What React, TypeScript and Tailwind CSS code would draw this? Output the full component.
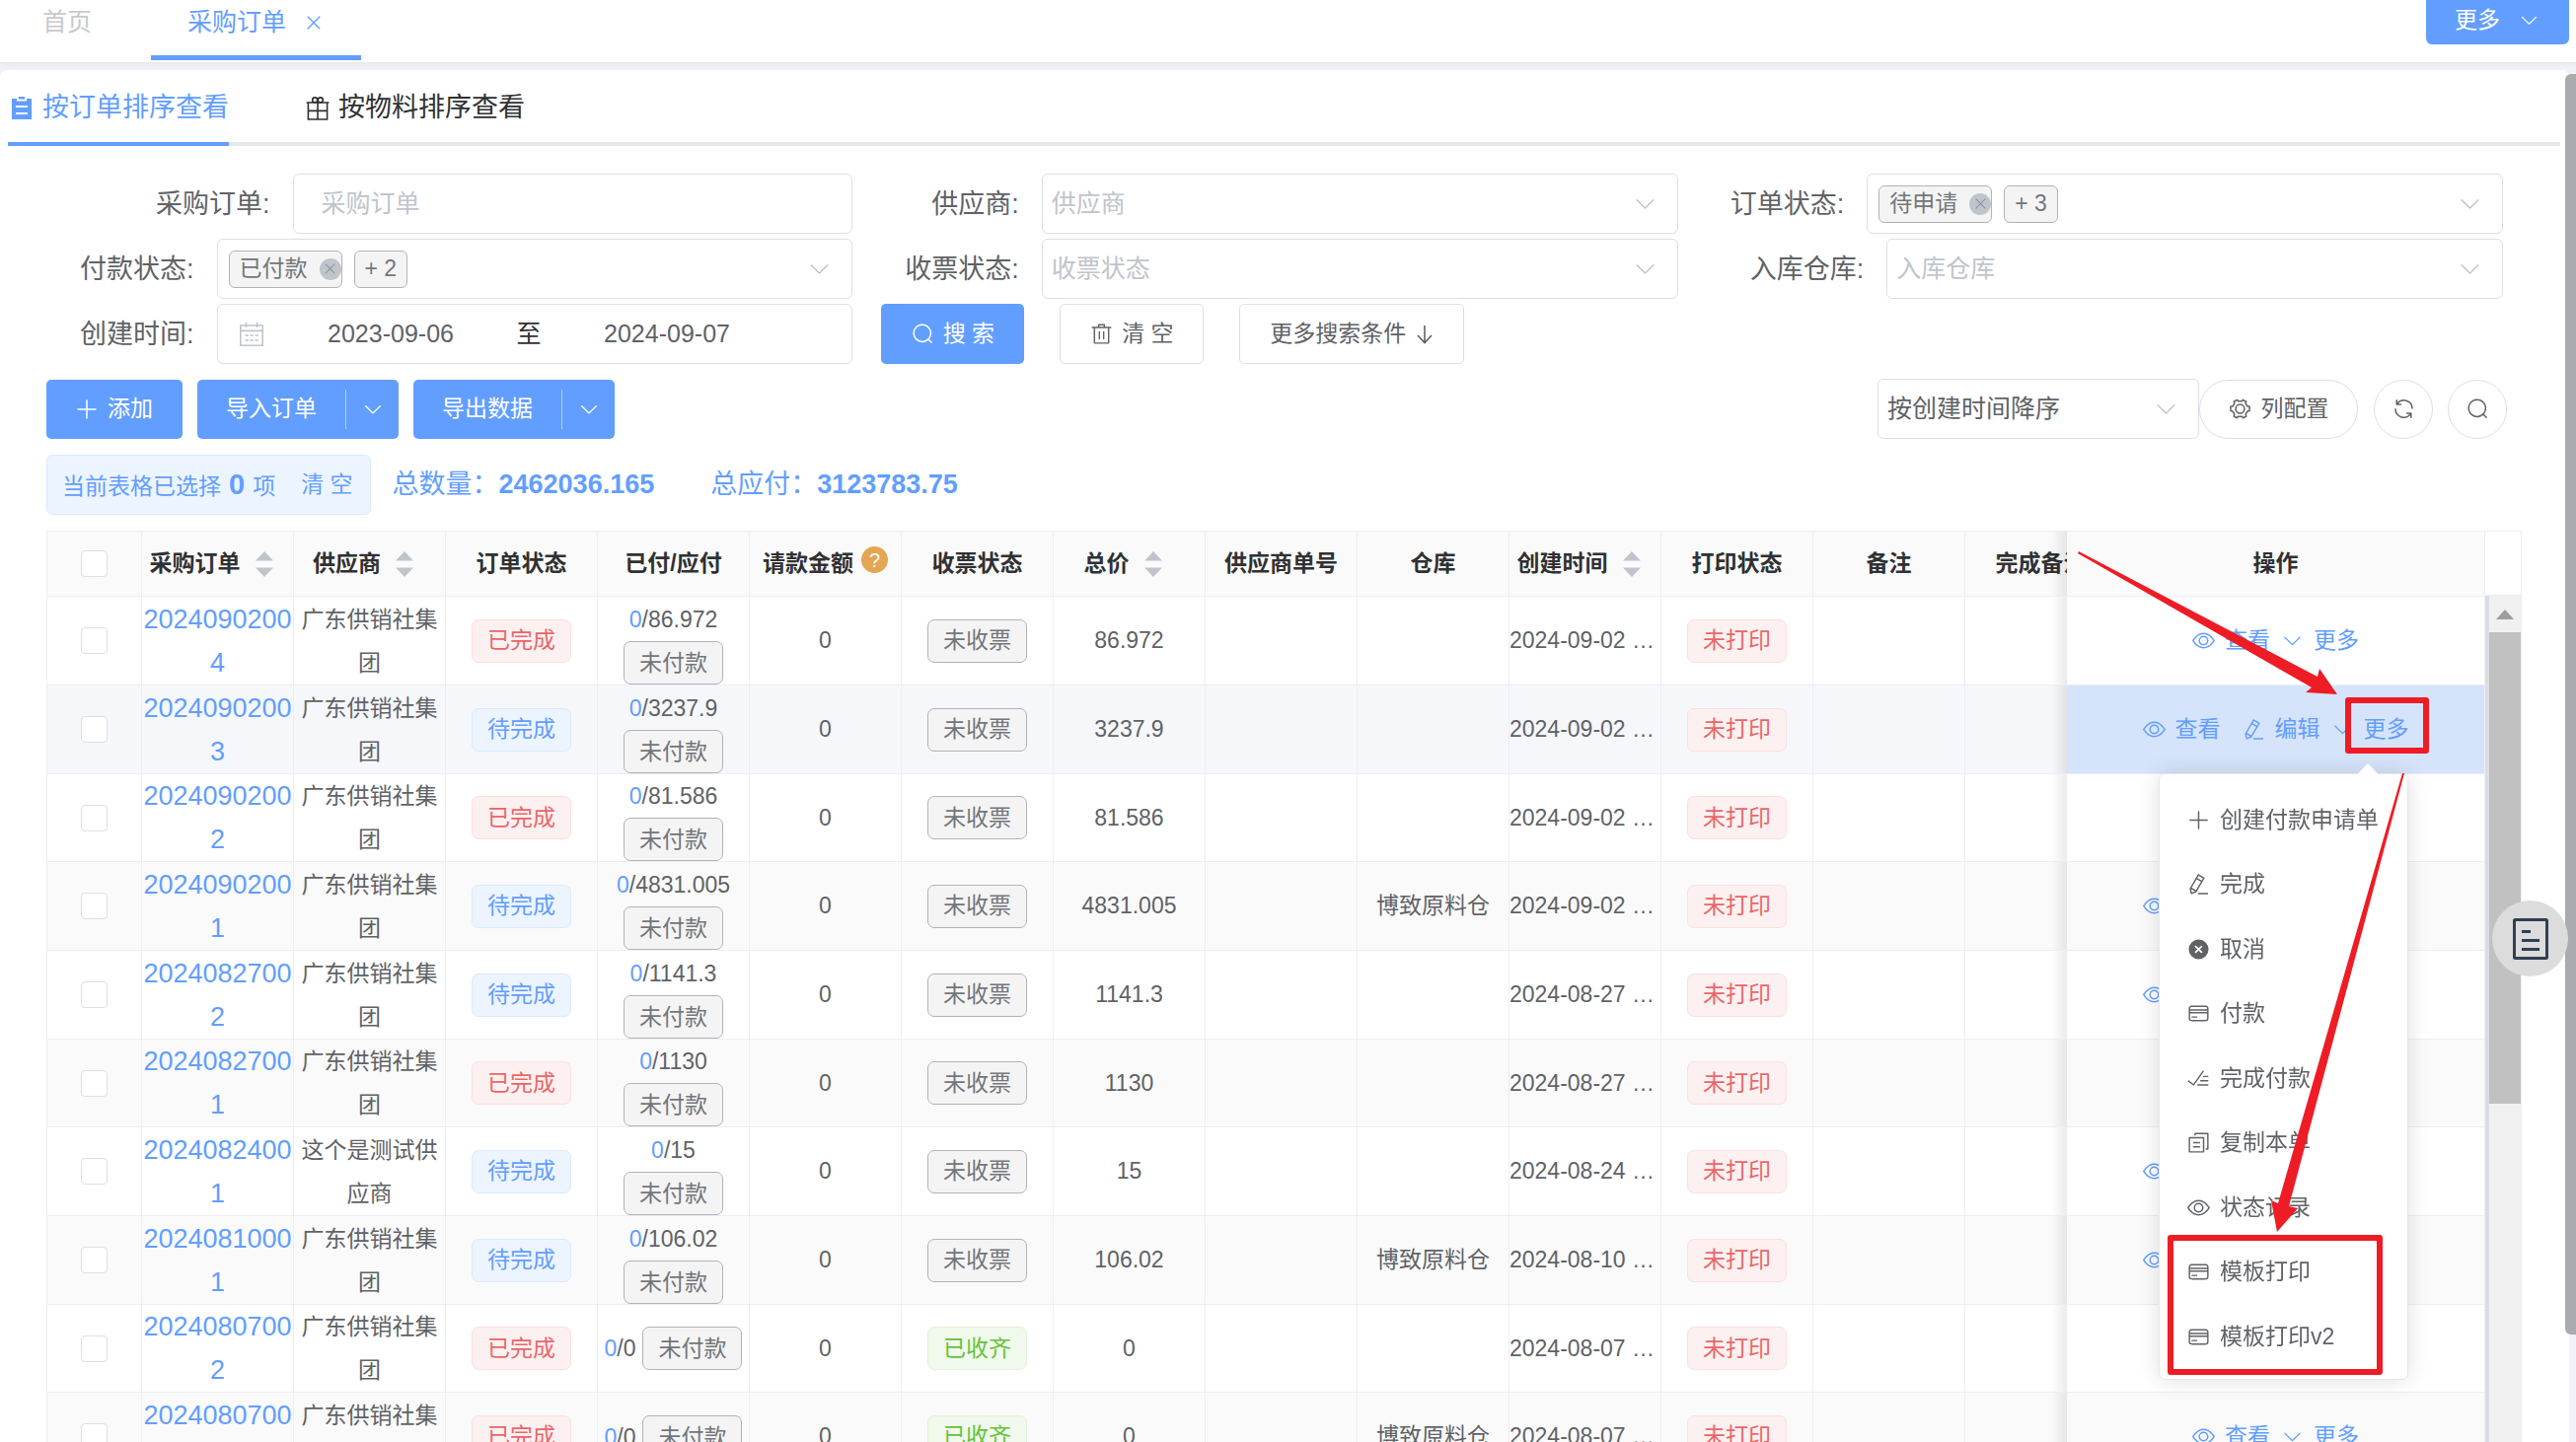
import type { ReactNode } from 'react';

const PATHS = {
  down: 'M831.872 340.864 512 652.672 192.128 340.864a30.592 30.592 0 0 0-42.752 0 29.12 29.12 0 0 0 0 41.6L489.664 714.24a32 32 0 0 0 44.672 0l340.288-331.712a29.12 29.12 0 0 0 0-41.728 30.592 30.592 0 0 0-42.752 0z',
  search:
    'm795.904 750.72 124.992 124.928a32 32 0 0 1-45.248 45.248L750.656 795.904a416 416 0 1 1 45.248-45.248zM480 832a352 352 0 1 0 0-704 352 352 0 0 0 0 704z',
  trash:
    'M160 256H96a32 32 0 0 1 0-64h256V95.936a32 32 0 0 1 32-32h256a32 32 0 0 1 32 32V192h256a32 32 0 1 1 0 64h-64v672a32 32 0 0 1-32 32H192a32 32 0 0 1-32-32V256zm448-64v-64H416v64h192zM224 896h576V256H224v640zm192-128a32 32 0 0 1-32-32V416a32 32 0 0 1 64 0v320a32 32 0 0 1-32 32zm192 0a32 32 0 0 1-32-32V416a32 32 0 0 1 64 0v320a32 32 0 0 1-32 32z',
  view: 'M512 160c320 0 512 352 512 352S832 864 512 864 0 512 0 512s192-352 512-352zm0 64c-225.28 0-384.128 208.064-436.8 288 52.608 79.872 211.456 288 436.8 288 225.28 0 384.128-208.064 436.8-288-52.608-79.872-211.456-288-436.8-288zm0 64a224 224 0 1 1 0 448 224 224 0 0 1 0-448zm0 64a160.192 160.192 0 0 0-160 160c0 88.192 71.744 160 160 160s160-71.808 160-160-71.744-160-160-160z',
  edit: 'm199.04 672.64 193.984 112 224-387.968-193.92-112-224 388.032zm-23.872 60.16 32.896 148.288 144.896-45.696L175.168 732.8zM455.04 229.248l193.92 112 56.704-98.112-193.984-112-56.64 98.112zM104.32 708.8l384-665.024 304.768 175.936L409.152 884.8h.064l-248.448 78.336L104.32 708.8zm384 254.272v-64h448v64h-448z',
  cancel:
    'M512 64a448 448 0 1 1 0 896 448 448 0 0 1 0-896zm0 393.664L407.936 353.6a38.4 38.4 0 1 0-54.336 54.336L457.664 512 353.6 616.064a38.4 38.4 0 1 0 54.336 54.336L512 566.336 616.064 670.4a38.4 38.4 0 1 0 54.336-54.336L566.336 512 670.4 407.936a38.4 38.4 0 1 0-54.336-54.336L512 457.664z',
  plus: 'M480 480V128a32 32 0 0 1 64 0v352h352a32 32 0 1 1 0 64H544v352a32 32 0 1 1-64 0V544H128a32 32 0 0 1 0-64h352z',
  close:
    'M764.288 214.592 512 466.88 259.712 214.592a31.936 31.936 0 0 0-45.12 45.12L466.752 512 214.528 764.224a31.936 31.936 0 1 0 45.12 45.184L512 557.184l252.288 252.288a31.936 31.936 0 0 0 45.12-45.12L557.12 512.064l252.288-252.352a31.936 31.936 0 1 0-45.12-45.184z',
  finished:
    'M280.768 753.728 691.456 167.04a32 32 0 1 1 52.416 36.672L314.24 817.472a32 32 0 0 1-45.44 7.296l-230.4-172.8a32 32 0 0 1 38.4-51.2l203.968 152.96zM736 448a32 32 0 1 1 0-64h192a32 32 0 1 1 0 64H736zM608 640a32 32 0 0 1 0-64h319.936a32 32 0 1 1 0 64H608zM480 832a32 32 0 1 1 0-64h447.936a32 32 0 1 1 0 64H480z',
  copy: 'M128 320v576h576V320H128zm-32-64h640a32 32 0 0 1 32 32v640a32 32 0 0 1-32 32H96a32 32 0 0 1-32-32V288a32 32 0 0 1 32-32zM960 96v704a32 32 0 0 1-32 32h-96v-64h64V128H384v64h-64V96a32 32 0 0 1 32-32h576a32 32 0 0 1 32 32zM256 672h320v64H256v-64zm0-192h320v64H256v-64z',
  card: 'M896 324.096c0-42.368-2.496-55.296-9.536-68.48a52.352 52.352 0 0 0-22.144-22.08c-13.12-7.04-26.048-9.536-68.416-9.536H228.096c-42.368 0-55.296 2.496-68.48 9.536a52.352 52.352 0 0 0-22.08 22.144c-7.04 13.12-9.536 26.048-9.536 68.416v375.808c0 42.368 2.496 55.296 9.536 68.48a52.352 52.352 0 0 0 22.144 22.08c13.12 7.04 26.048 9.536 68.416 9.536h567.808c42.368 0 55.296-2.496 68.48-9.536a52.352 52.352 0 0 0 22.08-22.144c7.04-13.12 9.536-26.048 9.536-68.416V324.096zm64 0v375.808c0 57.088-5.952 77.76-17.088 98.56-11.136 20.928-27.52 37.312-48.384 48.448-20.864 11.136-41.6 17.088-98.56 17.088H228.032c-57.088 0-77.76-5.952-98.56-17.088a116.288 116.288 0 0 1-48.448-48.384c-11.136-20.864-17.088-41.6-17.088-98.56V324.032c0-57.088 5.952-77.76 17.088-98.56 11.136-20.928 27.52-37.312 48.384-48.448 20.864-11.136 41.6-17.088 98.56-17.088H795.84c57.088 0 77.76 5.952 98.56 17.088 20.928 11.136 37.312 27.52 48.448 48.384 11.136 20.864 17.088 41.6 17.088 98.56zM64 320h896v64H64v-64zm0 128h896v64H64v-64zm128 192h256v64H192z',
};

type IconName = keyof typeof PATHS;

function Icon({ name, className = 'size-[23px]' }: { name: IconName; className?: string }) {
  return (
    <svg viewBox="0 0 1024 1024" fill="currentColor" aria-hidden="true" className={`shrink-0 ${className}`}>
      <path d={PATHS[name]} />
    </svg>
  );
}

function GearIcon() {
  return (
    <svg viewBox="0 0 24 24" fill="none" stroke="currentColor" strokeWidth="1.6" strokeLinejoin="round" aria-hidden="true" className="size-[23px] shrink-0">
      <circle cx="12" cy="12" r="4.6" />
      <path d="M9 2.4 L10 4 H14 L15 2.4 L18.6 4.4 L17.8 6.2 L19.8 9.4 H22 V14 L19.8 14.6 L17.8 17.8 L18.6 19.8 L15 21.6 L14 20 H10 L9 21.6 L5.4 19.8 L6.2 17.8 L4.2 14.6 L2 14 V9.4 H4.2 L6.2 6.2 L5.4 4.4 Z" />
    </svg>
  );
}

function RefreshIcon() {
  return (
    <svg viewBox="0 0 24 24" fill="none" stroke="currentColor" strokeWidth="1.6" strokeLinecap="round" strokeLinejoin="round" aria-hidden="true" className="size-[23px]">
      <path d="M20.9 11.4A8.9 8.9 0 0 0 5 6.4M4.400 3v4.400h4.400M3.1 12.2A8.9 8.9 0 0 0 19 17.6M19.600 21v-4.400h-4.400" />
    </svg>
  );
}

function CalendarIcon() {
  return (
    <svg viewBox="0 0 26 26" fill="none" stroke="currentColor" strokeWidth="1.6" aria-hidden="true" className="size-[26px] shrink-0">
      <path d="M1.8 4h22.4v20.2H1.8zM1.8 9.4h22.4M7.4 1v5M18.6 1v5" />
      <path d="M6.4 14h13.4M6.4 19h13.4" strokeDasharray="3.6 1.4" />
    </svg>
  );
}

function ClipboardIcon() {
  return (
    <svg viewBox="0 0 20 23" aria-hidden="true" className="h-[23px] w-[20px] shrink-0">
      <path d="M0 2h5v2.4h10V2h5v21H0z" fill="currentColor" />
      <path d="M7 0h6v2.6H7z" fill="currentColor" />
      <path d="M4 10h12M4 17h12" stroke="white" strokeWidth="1.8" />
    </svg>
  );
}

function GiftIcon() {
  return (
    <svg viewBox="0 0 24 24" fill="none" stroke="currentColor" strokeWidth="1.6" aria-hidden="true" className="size-[24px] shrink-0">
      <path d="M2.4 6h19.2v17H2.4zM.6 6h22.8M2.4 14.4h19.2M12 6v17" />
      <circle cx="9.2" cy="3.4" r="2.5" />
      <circle cx="14.8" cy="3.4" r="2.5" />
    </svg>
  );
}

function NoteIcon() {
  return (
    <svg viewBox="0 0 36 42" fill="none" stroke="#303f54" strokeWidth="3" aria-hidden="true" className="h-[42px] w-[36px]">
      <rect x="1.5" y="1.5" width="33" height="39" rx="1" />
      <path d="M9 13.5h9M9 22.5h18M9 31.5h18" />
    </svg>
  );
}

function Chevron() {
  return <Icon name="down" className="size-[25px] text-[#c0c4cc]" />;
}

const BOX = 'h-[61px] min-w-0 flex-1 rounded-[6px] border border-[#dcdfe6] bg-white text-[25px]';

function Field({ id, label, pad, children }: { id: string; label: string; pad: string; children: ReactNode }) {
  return (
    <div className={`flex items-center gap-[23px] ${pad}`}>
      <label htmlFor={id} className="text-[27px] leading-[40px] whitespace-nowrap">
        {label}:
      </label>
      {children}
    </div>
  );
}

function SelectBox({ id, text }: { id: string; text: string }) {
  return (
    <div className={`flex items-center pr-[20px] ${BOX}`}>
      <select id={id} defaultValue="" className="h-full min-w-0 flex-1 appearance-none bg-transparent pl-[9px] text-[#c0c4cc] outline-none">
        <option value="">{text}</option>
      </select>
      <Chevron />
    </div>
  );
}

function TagBox({ id, tag, more }: { id: string; tag: string; more: string }) {
  return (
    <div className={`flex items-center gap-3 pr-[20px] pl-[11px] ${BOX}`}>
      <span className="flex h-[38px] items-center gap-3 rounded-[6px] border border-[#b1b3b8] bg-[#f4f4f5] pl-[10px] text-[23px] text-[#73767a]">
        {tag}
        <button type="button" aria-label={`移除${tag}`} className="flex size-[22px] items-center justify-center rounded-full bg-[#c0c4cc] text-[#909399]">
          <Icon name="close" className="size-[17px]" />
        </button>
      </span>
      <span className="flex h-[38px] items-center rounded-[6px] border border-[#b1b3b8] bg-[#f4f4f5] px-[10px] text-[23px] text-[#73767a]">{more}</span>
      <button id={id} type="button" aria-label="展开选项" className="flex h-full flex-1 items-center justify-end">
        <Chevron />
      </button>
    </div>
  );
}

const TONES = {
  red: 'border-[#fbe0e0] bg-[#fdf0f0] text-[#ea6668]',
  blue: 'border-[#dbeafe] bg-[#ecf4ff] text-[#629eff]',
  green: 'border-[#e1f3d8] bg-[#f0f9eb] text-[#67c23a]',
  gray: 'border-[#b1b3b8] bg-[#f4f4f5] text-[#73767a]',
};

function Tag({ tone, children }: { tone: keyof typeof TONES; children: ReactNode }) {
  return <span className={`inline-flex h-[44px] items-center rounded-[7px] border px-[15px] align-middle ${TONES[tone]}`}>{children}</span>;
}

interface Row {
  no: string;
  vendor?: string;
  done?: boolean;
  total: string;
  store?: boolean;
  date: string;
  settled?: boolean;
}

const ROWS: Row[] = [
  { no: '20240902004', done: true, total: '86.972', date: '2024-09-02' },
  { no: '20240902003', total: '3237.9', date: '2024-09-02' },
  { no: '20240902002', done: true, total: '81.586', date: '2024-09-02' },
  { no: '20240902001', total: '4831.005', store: true, date: '2024-09-02' },
  { no: '20240827002', total: '1141.3', date: '2024-08-27' },
  { no: '20240827001', done: true, total: '1130', date: '2024-08-27' },
  { no: '20240824001', vendor: '这个是测试供应商', total: '15', date: '2024-08-24' },
  { no: '20240810001', total: '106.02', store: true, date: '2024-08-10' },
  { no: '20240807002', done: true, total: '0', date: '2024-08-07', settled: true },
  { no: '20240807001', done: true, total: '0', store: true, date: '2024-08-07', settled: true },
];

const COLUMNS: { title: string; sort?: boolean; help?: boolean }[] = [
  { title: '采购订单', sort: true },
  { title: '供应商', sort: true },
  { title: '订单状态' },
  { title: '已付/应付' },
  { title: '请款金额', help: true },
  { title: '收票状态' },
  { title: '总价', sort: true },
  { title: '供应商单号' },
  { title: '仓库' },
  { title: '创建时间', sort: true },
  { title: '打印状态' },
  { title: '备注' },
  { title: '完成备注' },
];

const MENU: { icon: IconName; text: string }[] = [
  { icon: 'plus', text: '创建付款申请单' },
  { icon: 'edit', text: '完成' },
  { icon: 'cancel', text: '取消' },
  { icon: 'card', text: '付款' },
  { icon: 'finished', text: '完成付款' },
  { icon: 'copy', text: '复制本单' },
  { icon: 'view', text: '状态记录' },
  { icon: 'card', text: '模板打印' },
  { icon: 'card', text: '模板打印v2' },
];

function Checkbox({ label }: { label: string }) {
  return <input type="checkbox" aria-label={label} className="mx-auto block size-[27px] appearance-none rounded-[4px] border border-[#dcdfe6] bg-white" />;
}

function SortArrows() {
  return (
    <svg viewBox="0 0 18 26" fill="#c0c4cc" aria-hidden="true" className="h-[26px] w-[18px]">
      <path d="M9 0l9 9.5H0zM9 26l9-9.5H0z" />
    </svg>
  );
}

function Menu() {
  return (
    <div role="menu" className="absolute top-full right-[77px] w-[253px] rounded-[7px] border border-[#e4e7ed] bg-white pt-[13px] pb-[10px] text-left shadow-[0_0_22px_rgba(0,0,0,0.13)]">
      <svg viewBox="0 0 22 13" aria-hidden="true" className="absolute -top-[12px] right-[29px] h-[13px] w-[22px]">
        <path d="M0 12.5L11 1l11 11.500z" fill="white" />
      </svg>
      {MENU.map((m) => (
        <button key={m.text} type="button" role="menuitem" className="flex h-[65px] w-full items-center gap-[10px] pl-[28px] whitespace-nowrap text-[#606266] even:h-[66px]">
          <Icon name={m.icon} />
          {m.text}
        </button>
      ))}
    </div>
  );
}

const CELL = 'border-r border-b border-[#ebeef5] p-0';
const PINNED =
  'sticky right-0 before:pointer-events-none before:absolute before:inset-y-0 before:right-full before:w-4 before:bg-linear-to-l before:from-black/8 before:to-transparent';

function OrderRow({ row, index }: { row: Row; index: number }) {
  const hover = index === 1;
  const bg = index % 2 ? 'bg-[#fafafa]' : 'bg-white';
  return (
    <tr className={`h-[90px] nth-[3n]:h-[89px] ${hover ? 'bg-[#f5f7fb]' : bg}`}>
      <td className={CELL}>
        <Checkbox label={`选择 ${row.no}`} />
      </td>
      <td className={CELL}>
        <a href="#order" className="block text-[27px] leading-[44px] break-all text-[#629eff]">
          {row.no}
        </a>
      </td>
      <td className={`${CELL} px-[6px] leading-[44px]`}>{row.vendor ?? '广东供销社集团'}</td>
      <td className={CELL}>
        <Tag tone={row.done ? 'red' : 'blue'}>{row.done ? '已完成' : '待完成'}</Tag>
      </td>
      <td className={`${CELL} leading-[44px]`}>
        <div className={row.settled ? 'flex items-center justify-center gap-[7px]' : 'flex flex-col items-center'}>
          <span>
            <span className="text-[#629eff]">0</span>/{row.total}
          </span>
          <Tag tone="gray">未付款</Tag>
        </div>
      </td>
      <td className={CELL}>0</td>
      <td className={CELL}>
        <Tag tone={row.settled ? 'green' : 'gray'}>{row.settled ? '已收齐' : '未收票'}</Tag>
      </td>
      <td className={CELL}>{row.total}</td>
      <td className={CELL} />
      <td className={CELL}>{row.store ? '博致原料仓' : ''}</td>
      <td className={`${CELL} text-left whitespace-nowrap`}>{row.date} …</td>
      <td className={CELL}>
        <Tag tone="red">未打印</Tag>
      </td>
      <td className={CELL} />
      <td className={CELL} />
      <td className={`${CELL} ${PINNED} ${hover ? 'z-20 bg-[#d6e4fb]' : `z-10 ${bg}`}`}>
        <div className="flex items-center justify-center text-[#629eff]">
          <button type="button" className="flex items-center gap-[10px]">
            <Icon name="view" />
            查看
          </button>
          {!row.done && (
            <button type="button" className="ml-[22px] flex items-center gap-[10px]">
              <Icon name="edit" />
              编辑
            </button>
          )}
          <button type="button" aria-haspopup="menu" className="ml-[11px] flex items-center gap-[10px]">
            <Icon name="down" />
            更多
          </button>
        </div>
        {hover && <Menu />}
      </td>
    </tr>
  );
}

function SplitButton({ text }: { text: string }) {
  return (
    <div className="flex h-[60px] items-center overflow-hidden rounded-[5px] bg-[#629eff] text-[23px] text-white">
      <button type="button" className="h-full px-[29px]">
        {text}
      </button>
      <span className="h-[40px] w-px bg-white/50" />
      <button type="button" aria-label={`${text}更多`} className="flex h-full w-[53px] items-center justify-center">
        <Icon name="down" className="size-[22px]" />
      </button>
    </div>
  );
}

const OUTLINE = 'flex items-center justify-center border border-[#dcdfe6] bg-white text-[23px]';

export default function App() {
  return (
    <div className="relative flex h-screen flex-col overflow-hidden bg-[#f0f2f7] font-['Liberation_Sans','Noto_Sans_CJK_SC',sans-serif] text-[23px] text-[#606266]">
      <header className="z-10 flex h-[63px] shrink-0 items-start justify-between bg-white pr-[7px] shadow-[0_2px_6px_rgba(0,0,0,0.05)]">
        <nav className="flex text-[25px]">
          <a href="#home" className="pt-[4px] pr-[60px] pl-[43px] leading-[36px] text-[#c8c9cc]">
            首页
          </a>
          <div className="flex h-[61px] items-start gap-[17px] border-b-[5px] border-[#629eff] px-[37px] pt-[4px] leading-[36px] text-[#629eff]">
            <a href="#orders">采购订单</a>
            <button type="button" aria-label="关闭" className="flex h-[38px] items-center">
              <Icon name="close" className="size-[22px]" />
            </button>
          </div>
        </nav>
        <button type="button" className="flex h-[45px] items-center gap-[19px] rounded-b-[6px] bg-[#629eff] pr-[30px] pb-[5px] pl-[29px] text-white">
          更多
          <Icon name="down" className="size-[21px]" />
        </button>
      </header>

      <main className="mt-[8px] mr-[7px] flex min-h-0 flex-1 flex-col rounded-t-[8px] bg-white">
        <div role="tablist" className="mr-[9px] ml-[8px] flex h-[77px] shrink-0 items-stretch border-b-4 border-[#e4e7ed] text-[27px]">
          <button role="tab" type="button" aria-selected="true" className="-mb-[4px] flex items-center gap-[11px] border-b-4 border-[#629eff] pt-1 pl-[4px] text-[#629eff]">
            <ClipboardIcon />
            按订单排序查看
          </button>
          <button role="tab" type="button" aria-selected="false" className="ml-[78px] flex items-center gap-[9px] pt-1 text-[#303133]">
            <GiftIcon />
            按物料排序查看
          </button>
        </div>

        <form className="mt-[28px] mr-[67px] ml-[28px] grid grid-cols-3 gap-y-[5px]" onSubmit={(e) => e.preventDefault()}>
          <Field id="order" label="采购订单" pad="pl-[130px]">
            <input id="order" placeholder="采购订单" className={`pl-[28px] placeholder:text-[#c0c4cc] ${BOX}`} />
          </Field>
          <Field id="vendor" label="供应商" pad="pl-[80px]">
            <SelectBox id="vendor" text="供应商" />
          </Field>
          <Field id="state" label="订单状态" pad="pl-[53px]">
            <TagBox id="state" tag="待申请" more="+ 3" />
          </Field>
          <Field id="pay" label="付款状态" pad="pl-[53px]">
            <TagBox id="pay" tag="已付款" more="+ 2" />
          </Field>
          <Field id="invoice" label="收票状态" pad="pl-[53px]">
            <SelectBox id="invoice" text="收票状态" />
          </Field>
          <Field id="store" label="入库仓库" pad="pl-[73px]">
            <SelectBox id="store" text="入库仓库" />
          </Field>
          <Field id="from" label="创建时间" pad="pl-[53px]">
            <div className={`flex items-center pl-[21px] ${BOX}`}>
              <span className="text-[#c0c4cc]">
                <CalendarIcon />
              </span>
              <input id="from" defaultValue="2023-09-06" className="ml-[36px] w-[185px] text-center" />
              <span className="w-[95px] text-center text-[#303133]">至</span>
              <input aria-label="结束日期" defaultValue="2024-09-07" className="w-[185px] text-center" />
            </div>
          </Field>
          <div className="flex gap-[36px] pl-[29px]">
            <button type="submit" className="flex h-[61px] w-[145px] items-center justify-center gap-[9px] rounded-[5px] bg-[#629eff] text-white">
              <Icon name="search" />搜 索
            </button>
            <button type="reset" className={`h-[61px] w-[146px] gap-[9px] rounded-[5px] ${OUTLINE}`}>
              <Icon name="trash" />清 空
            </button>
            <button type="button" className={`h-[61px] w-[228px] gap-[10px] rounded-[5px] ${OUTLINE}`}>
              更多搜索条件
              <svg viewBox="0 0 18 20" fill="none" stroke="currentColor" strokeWidth="1.6" aria-hidden="true" className="h-[20px] w-[18px]">
                <path d="M9 1v17M2 11l7 7.500 7-7.500" />
              </svg>
            </button>
          </div>
        </form>

        <div className="mt-[15px] mr-[63px] ml-[47px] flex items-center justify-between">
          <div className="flex gap-[15px]">
            <button type="button" className="flex h-[60px] items-center gap-[9px] rounded-[5px] bg-[#629eff] pr-[30px] pl-[29px] text-white">
              <Icon name="plus" className="size-[24px]" />
              添加
            </button>
            <SplitButton text="导入订单" />
            <SplitButton text="导出数据" />
          </div>
          <div className="flex items-center">
            <div className="flex h-[61px] w-[326px] items-center rounded-[6px] border border-[#dcdfe6] pr-[20px] text-[25px]">
              <select aria-label="排序" className="h-full min-w-0 flex-1 appearance-none bg-transparent pl-[9px] outline-none">
                <option>按创建时间降序</option>
              </select>
              <Chevron />
            </div>
            <button type="button" className={`h-[60px] w-[161px] gap-[10px] rounded-full ${OUTLINE}`}>
              <GearIcon />
              列配置
            </button>
            <button type="button" aria-label="刷新" className={`ml-4 size-[60px] rounded-full ${OUTLINE}`}>
              <RefreshIcon />
            </button>
            <button type="button" aria-label="搜索" className={`ml-[15px] size-[60px] rounded-full ${OUTLINE}`}>
              <Icon name="search" />
            </button>
          </div>
        </div>

        <div className="mt-[16px] ml-[47px] flex items-center text-[27px] text-[#629eff]">
          <div className="flex h-[61px] items-center gap-[26px] rounded-[6px] border border-[#dbeafe] bg-[#ecf4ff] pr-[17px] pl-[15px] text-[23px]">
            <span className="flex items-baseline gap-[8px] whitespace-nowrap">
              当前表格已选择<b className="text-[29px]">0</b>项
            </span>
            <button type="button">清 空</button>
          </div>
          <span className="ml-[22px] whitespace-nowrap">
            总数量：<b>2462036.165</b>
          </span>
          <span className="ml-[57px] whitespace-nowrap">
            总应付：<b>3123783.75</b>
          </span>
        </div>

        <div className="mt-[16px] mr-[48px] ml-[47px] flex min-h-0 flex-1 border-t border-r border-l border-[#ebeef5]">
          <div className="min-w-0 flex-1 overflow-hidden">
            <table className="w-[2522px] table-fixed border-separate border-spacing-0 text-center">
              <colgroup>
                <col className="w-[96px]" />
                {COLUMNS.map((c) => (
                  <col key={c.title} className="w-[154px]" />
                ))}
                <col className="w-[424px]" />
              </colgroup>
              <thead className="text-[#303133]">
                <tr className="h-[66px] bg-[#fafafa]">
                  <th className={CELL}>
                    <Checkbox label="全选" />
                  </th>
                  {COLUMNS.map((c) => (
                    <th key={c.title} className={`${CELL} font-bold whitespace-nowrap`}>
                      <div className="flex items-center justify-center">
                        {c.title}
                        {c.sort && (
                          <button type="button" aria-label={`按${c.title}排序`} className="mr-[13px] ml-[15px]">
                            <SortArrows />
                          </button>
                        )}
                        {c.help && (
                          <span className="mb-2 ml-[8px] flex size-[27px] items-center justify-center rounded-full bg-[#e4a652] text-[20px] font-normal text-white">?</span>
                        )}
                      </div>
                    </th>
                  ))}
                  <th className={`${CELL} ${PINNED} z-10 bg-[#fafafa]`}>操作</th>
                </tr>
              </thead>
              <tbody>
                {ROWS.map((row, i) => (
                  <OrderRow key={row.no} row={row} index={i} />
                ))}
              </tbody>
            </table>
          </div>
          <div className="flex w-[36px] shrink-0 flex-col" aria-hidden="true">
            <div className="h-[65px] border-b border-[#ebeef5]" />
            <div className="flex flex-1 flex-col border-l-4 border-[#dcdde2] bg-[#f0f0f1]">
              <div className="flex h-[37px] items-center justify-center">
                <svg viewBox="0 0 18 10" className="h-[10px] w-[18px]" fill="#9d9d9d">
                  <path d="M9 0l9 10H0z" />
                </svg>
              </div>
              <div className="h-[478px] bg-[#c1c1c1]" />
            </div>
          </div>
        </div>
      </main>

      <div aria-hidden="true" className="absolute top-[75px] right-0 z-10 h-[1278px] w-[11px] rounded-l-[6px] bg-[#a9abae]" />
      <button type="button" aria-label="备忘" className="absolute top-[913px] right-[8px] z-20 flex size-[77px] items-center justify-center rounded-full bg-[#dcdcdc]">
        <NoteIcon />
      </button>

      <svg viewBox="2080 550 400 860" aria-hidden="true" className="pointer-events-none absolute top-[550px] right-[131px] z-30 h-[860px] w-[400px]">
        <g fill="#ee1c25">
          <path d="M2107 559L2349 686 2351 678 2369 704 2337 702 2343 697 2106 561z" />
          <path d="M2435 784L2437 784 2320 1223 2329 1225 2308 1249 2302 1217 2309 1220z" />
        </g>
        <g fill="none" stroke="#ee1c25" strokeWidth="6" strokeLinejoin="round">
          <rect x="2380" y="710" width="79" height="51" />
          <rect x="2200" y="1255" width="212" height="136" />
        </g>
      </svg>
    </div>
  );
}
